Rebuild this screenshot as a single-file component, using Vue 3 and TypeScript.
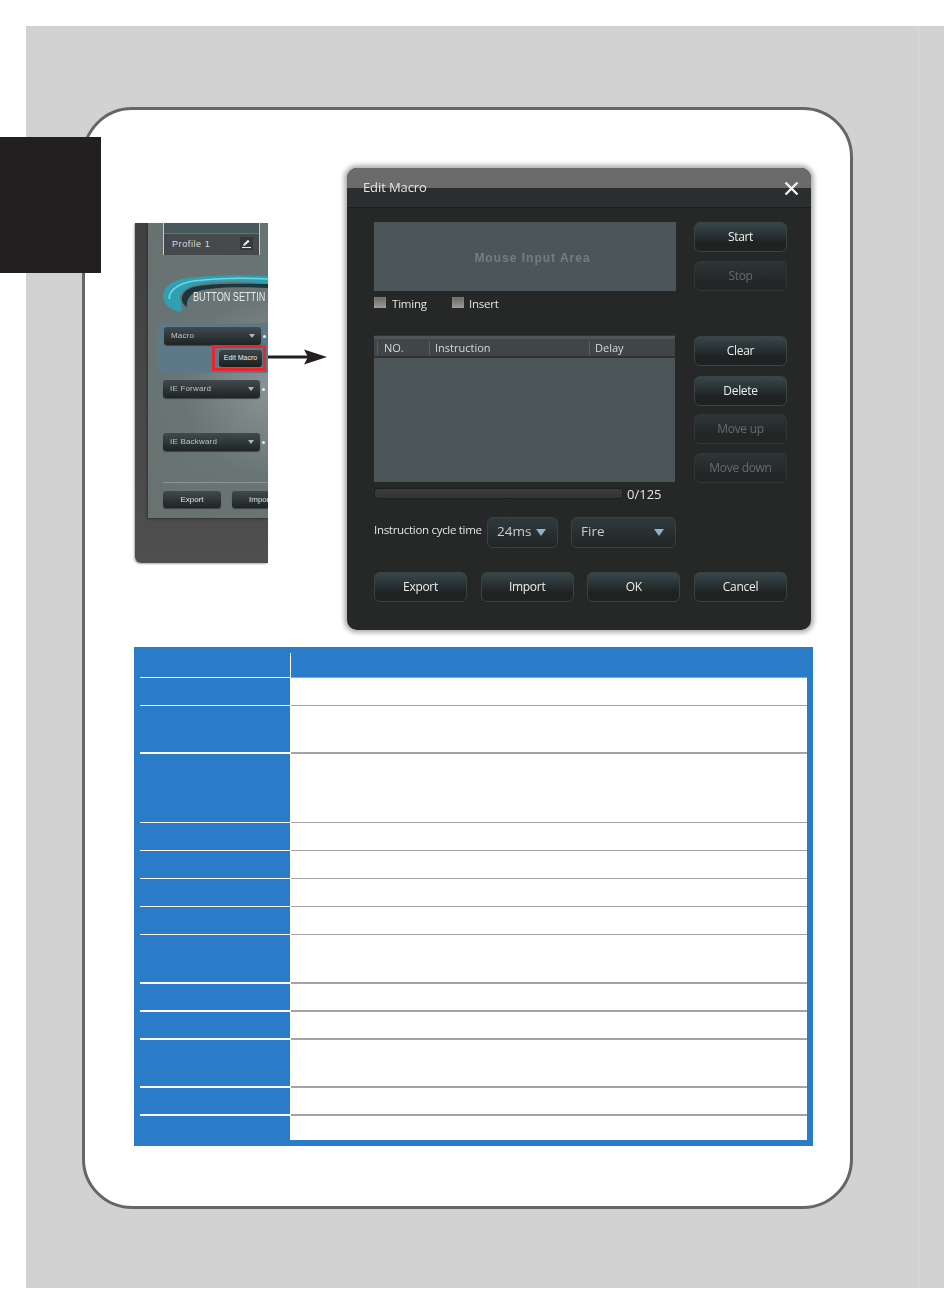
<script setup lang="ts">
const sideMain = [
  { label: "Start", off: false, cls: "" },
  { label: "Stop", off: true, cls: "mt-9" },
];
const sideList = [
  { label: "Clear", off: false, cls: "" },
  { label: "Delete", off: false, cls: "mt-10" },
  { label: "Move up", off: true, cls: "mt-8" },
  { label: "Move down", off: true, cls: "mt-9" },
];
const footer = ["Export", "Import", "OK", "Cancel"];
// row heights and rule weights read from the blue table
const rows = [
  { h: 28, thick: false },
  { h: 48, thick: true },
  { h: 69, thick: false },
  { h: 28, thick: false },
  { h: 28, thick: false },
  { h: 28, thick: false },
  { h: 28, thick: false },
  { h: 49, thick: true },
  { h: 28, thick: true },
  { h: 28, thick: true },
  { h: 48, thick: true },
  { h: 28, thick: true },
  { h: 24, thick: false },
];
</script>

<template>
  <div class="page">
    <div class="sheet">
      <div class="stripe" />
      <div class="tab" />
      <div class="card">
        <div class="top">
          <div class="shot">
            <div class="shot-panel">
              <div class="profile">
                <div class="profile-head" />
                <div class="profile-row">
                  <span class="profile-name">Profile 1</span>
                  <span class="pen">
                    <svg width="9" height="9" viewBox="0 0 9 9"><path d="M0 9h9V8H0zM1 7l.6-2L6 .8 7.6 2.4 3 6.6z" fill="#e8e8e8" /></svg>
                  </span>
                </div>
              </div>
              <div class="brand">
                <svg class="swoosh" width="105" height="38" viewBox="0 0 105 38">
                  <path d="M17 37C6 34-1 27 0 20 2 8 16 3 32 2 55 0 80 0 105 1v8C80 6 55 6 38 9 24 11 16 17 17 24 18 29 21 33 17 37z" fill="#2f9fb2" />
                  <path d="M24 32C17 28 17 20 24 15 32 9 60 8 105 9v4C70 11 42 13 33 17 26 20 23 26 24 32z" fill="#1c3640" />
                  <path d="M6 24C6 13 20 6 40 5 60 3 85 3 105 4" fill="none" stroke="#6fd6e2" stroke-width="1.5" />
                </svg>
                <span class="brand-text">BUTTON SETTIN</span>
              </div>
              <div class="active-box">
                <div class="drop">Macro<i /></div>
                <div class="edit-wrap">
                  <span class="edit-btn">Edit Macro</span>
                </div>
              </div>
              <div class="drop drop-forward">IE Forward<i /></div>
              <div class="drop drop-back">IE Backward<i /></div>
              <div class="shot-rule" />
              <div class="shot-btns">
                <span class="mini">Export</span>
                <span class="mini mini-cut">Impor</span>
              </div>
            </div>
          </div>
          <svg class="arrow" width="77" height="16" viewBox="0 0 77 16">
            <path d="M0 6.6h44v3H0z" fill="#231f20" />
            <path d="M36 .6 59 8 36 15.4 40 8z" fill="#231f20" />
          </svg>
          <div class="dialog">
            <div class="title-bar">
              <span class="title">Edit Macro</span>
              <svg class="close" width="15" height="15" viewBox="0 0 15 15"><path d="M1.5 1.5l12 12M13.5 1.5l-12 12" stroke="#f2f2f2" stroke-width="2.4" /></svg>
            </div>
            <div class="dialog-body">
              <div class="columns">
                <div class="col-left">
                  <div class="input-area">Mouse Input Area</div>
                  <div class="checks">
                    <label class="check"><i />Timing</label>
                    <label class="check check-2"><i />Insert</label>
                  </div>
                  <div class="list">
                    <div class="list-head">
                      <span class="c-no">NO.</span>
                      <span class="c-ins">Instruction</span>
                      <span class="c-del">Delay</span>
                    </div>
                  </div>
                  <div class="progress-row">
                    <div class="progress" />
                    <span>0/125</span>
                  </div>
                  <div class="cycle-row">
                    <span class="cycle-label">Instruction cycle time</span>
                    <div class="select select-ms">24ms<i /></div>
                    <div class="select select-fire">Fire<i /></div>
                  </div>
                </div>
                <div class="col-right">
                  <div class="side-group">
                    <button v-for="b in sideMain" :key="b.label" class="btn" :class="[b.cls, { off: b.off }]">{{ b.label }}</button>
                  </div>
                  <div class="side-group second">
                    <button v-for="b in sideList" :key="b.label" class="btn" :class="[b.cls, { off: b.off }]">{{ b.label }}</button>
                  </div>
                </div>
              </div>
              <div class="footer">
                <button v-for="f in footer" :key="f" class="btn">{{ f }}</button>
              </div>
            </div>
          </div>
        </div>

        <div class="table">
          <div class="t-head">
            <div class="t-head-left" />
            <div class="t-head-right" />
          </div>
          <div
            v-for="(r, i) in rows"
            :key="i"
            class="t-row"
            :class="{ thick: r.thick, last: i === rows.length - 1 }"
            :style="{ height: r.h + 'px' }"
          >
            <div class="t-left"><div class="t-left-fill" /></div>
            <div class="t-right"><div class="t-right-fill" /></div>
          </div>
        </div>
      </div>
    </div>
  </div>
</template>

<style>
html, body { margin: 0; background: #fff; }
</style>

<style scoped>
.page {
  width: 944px;
  height: 1314px;
  padding: 26px 0 0 26px;
  box-sizing: border-box;
  background: #fff;
  font-family: "Open Sans", "Liberation Sans", sans-serif;
}
.sheet {
  position: relative;
  height: 1262px;
  padding: 81px 91px 0 56px;
  box-sizing: border-box;
  background: #d2d2d2;
}
.stripe {
  position: absolute;
  left: 892px;
  top: 0;
  bottom: 0;
  width: 1px;
  background: #dcdcdc;
}
.tab {
  position: absolute;
  left: -26px;
  top: 111px;
  width: 101px;
  height: 136px;
  background: #231f20;
  z-index: 2;
}
.card {
  height: 1102px;
  box-sizing: border-box;
  border: 3px solid #666;
  border-radius: 50px;
  background: #fff;
  padding: 55px 0 0 50px;
}
.top {
  display: flex;
  align-items: flex-start;
}

/* left screenshot */
.shot {
  width: 133px;
  height: 340px;
  margin-top: 58px;
  padding-left: 1px;
  box-sizing: border-box;
  background: linear-gradient(#3f4040, #4f4f4f);
  border-radius: 0 0 0 6px;
  box-shadow: -1px 1px 2px #aaa;
  overflow: hidden;
  filter: blur(.3px);
}
.shot-panel {
  margin-left: 12px;
  height: 295px;
  padding-left: 15px;
  background: radial-gradient(circle at 105% 55%, #8b9597, #697474 45%, #667170);
  box-shadow: -1px 1px 2px #333;
  color: #d8dcdc;
  font: 8.5px "Liberation Sans", sans-serif;
}
.profile {
  width: 97px;
  height: 32px;
  box-sizing: border-box;
  border: 1px solid #a7d8de;
  border-top: none;
}
.profile-head {
  height: 10px;
  background: #47595d;
  border-bottom: 1px solid #6a7474;
}
.profile-row {
  height: 21px;
  display: flex;
  align-items: center;
  justify-content: space-between;
  padding: 0 6px 2px 8px;
  box-sizing: border-box;
  background: #45494b;
  font-size: 9px;
  letter-spacing: .6px;
}
.pen {
  width: 13px;
  height: 13px;
  display: flex;
  align-items: center;
  justify-content: center;
  background: #35393a;
}
.brand {
  position: relative;
  height: 38px;
  margin-top: 20px;
  overflow: hidden;
}
.swoosh { position: absolute; left: 0; top: 0; }
.brand-text {
  position: absolute;
  left: 30px;
  top: 15px;
  color: #e6eaea;
  font-size: 12px;
  white-space: nowrap;
  transform: scaleX(.76);
  transform-origin: left;
}
.active-box {
  position: relative;
  margin: 10px 0 0 -6px;
  height: 50px;
  padding: 4px 0 0 7px;
  box-sizing: border-box;
  background: #5d7987;
  border-radius: 4px 0 0 4px;
}
.drop {
  position: relative;
  width: 97px;
  height: 18px;
  box-sizing: border-box;
  padding-left: 7px;
  line-height: 17px;
  font-size: 8px;
  letter-spacing: .2px;
  color: #bcc4c4;
  background: linear-gradient(#404b4e, #1f2324);
  border-radius: 3px;
  box-shadow: 0 1px 1px #3c4545;
}
.drop i {
  position: absolute;
  right: 6px;
  top: 7px;
  border: 3.5px solid transparent;
  border-top: 4px solid #a9b8bd;
  border-bottom: 0;
}
.drop::after {
  content: "";
  position: absolute;
  right: -5px;
  top: 8px;
  width: 3px;
  height: 3px;
  border-radius: 50%;
  background: #e8eeee;
}
.drop-forward { margin-top: 7px; }
.drop-back { margin-top: 35px; }
.edit-wrap {
  position: absolute;
  left: 55px;
  top: 22px;
  width: 54px;
  height: 26px;
  box-sizing: border-box;
  border: 3px solid #e8262c;
  padding: 2px 0 0 4px;
  background: #5d7987;
}
.edit-btn {
  display: block;
  width: 43px;
  height: 17px;
  line-height: 16px;
  text-align: center;
  font-size: 7px;
  color: #eee;
  white-space: nowrap;
  background: linear-gradient(#3c4648, #1c1f20);
  border-radius: 3px;
}
.shot-rule {
  height: 1px;
  margin-top: 31px;
  background: #8b9494;
}
.shot-btns {
  display: flex;
  gap: 11px;
  margin-top: 8px;
}
.mini {
  flex: none;
  width: 58px;
  height: 17px;
  line-height: 17px;
  text-align: center;
  font-size: 8px;
  color: #dfe3e3;
  background: linear-gradient(#404b4e, #1f2324);
  border-radius: 3px;
  box-shadow: 0 1px 1px #3c4545;
}
.mini-cut {
  width: 36px;
  box-sizing: border-box;
  padding-left: 17px;
  text-align: left;
  border-radius: 3px 0 0 3px;
}

.arrow {
  flex: none;
  margin-top: 184px;
}

/* dialog */
.dialog {
  width: 464px;
  height: 462px;
  margin: 3px 0 0 2px;
  border-radius: 10px;
  background: #262828;
  box-shadow: 0 0 4px 3px #b4b4b4;
  overflow: hidden;
  color: #e4e6e6;
  font-size: 12px;
  filter: blur(.3px);
}
.title-bar {
  position: relative;
  height: 40px;
  box-sizing: border-box;
  background: linear-gradient(#6b6b6b 0 20px, #2b2e2f 20px);
  border-bottom: 1px solid #1c1d1d;
}
.title {
  position: absolute;
  left: 16px;
  top: 10px;
  font-size: 13px;
  letter-spacing: -.1px;
}
.close { position: absolute; right: 12px; top: 13px; }
.dialog-body {
  padding: 14px 24px 0 27px;
}
.columns {
  display: flex;
  gap: 18px;
}
.col-left { width: 302px; }
.col-right { width: 93px; }
.input-area {
  height: 69px;
  display: flex;
  align-items: center;
  justify-content: center;
  padding: 3px 0 0 15px;
  box-sizing: border-box;
  background: #4c5558;
  color: #757d7f;
  font: bold 12px "Liberation Sans", sans-serif;
  letter-spacing: 1px;
}
.checks {
  display: flex;
  height: 22px;
  align-items: center;
  margin-top: 1px;
}
.check {
  display: flex;
  align-items: center;
  font-size: 11.5px;
  letter-spacing: -.2px;
}
.check i {
  width: 12px;
  height: 11px;
  margin: -2px 6px 0 0;
  background: linear-gradient(#6a6a66, #9a9a94);
  box-shadow: inset 0 0 1px #ccc;
}
.check-2 { margin-left: 25px; }
.check-2 i { margin-right: 5px; }
.list {
  width: 301px;
  height: 147px;
  margin-top: 21px;
  box-sizing: border-box;
  padding-top: 3px;
  background: #4c5558;
  border-top: 1px solid #333;
}
.list-head {
  height: 19px;
  display: flex;
  align-items: center;
  box-sizing: border-box;
  background: #424546;
  border-bottom: 2px solid #2f3132;
  font-size: 11px;
  color: #d6d9d9;
}
.list-head span {
  height: 14px;
  line-height: 14px;
  box-sizing: border-box;
  padding-left: 5px;
  border-left: 1px solid #5e6162;
}
.c-no { width: 52px; margin-left: 3px; padding-left: 6px !important; }
.c-ins { width: 160px; }
.c-del { flex: 1; }
.progress-row {
  display: flex;
  align-items: center;
  gap: 4px;
  height: 13px;
  margin-top: 5px;
  font-size: 13px;
}
.progress {
  width: 249px;
  height: 11px;
  box-sizing: border-box;
  border: 1px solid #1e2020;
  border-radius: 3px;
  background: linear-gradient(#3b3d3d, #333535);
}
.cycle-row {
  display: flex;
  align-items: flex-start;
  margin-top: 17px;
}
.cycle-label {
  width: 113px;
  margin-top: 5px;
  font-size: 11.5px;
  letter-spacing: -.3px;
  white-space: nowrap;
}
.select {
  position: relative;
  height: 31px;
  box-sizing: border-box;
  padding-left: 9px;
  line-height: 27px;
  font-size: 13.5px;
  color: #c9cdcd;
  border: 1px solid #3b4142;
  border-radius: 6px;
  background: linear-gradient(#2f3a3d, #222526);
}
.select i {
  position: absolute;
  top: 11px;
  border: 5.5px solid transparent;
  border-top: 7px solid #8fb3c6;
  border-bottom: 0;
}
.select-ms { width: 71px; }
.select-ms i { right: 11px; }
.select-fire { width: 105px; margin-left: 13px; }
.select-fire i { right: 11px; }
.side-group { display: flex; flex-direction: column; }
.second { margin-top: 45px; }
.mt-10 { margin-top: 10px; }
.mt-8 { margin-top: 8px; }
.mt-9 { margin-top: 9px; }
.btn {
  height: 30px;
  width: 93px;
  padding: 0 0 1px;
  box-sizing: border-box;
  font-family: "Open Sans", "Liberation Sans", sans-serif;
  font-size: 12px;
  letter-spacing: -.3px;
  color: #eceeee;
  border: 1px solid #3a4344;
  border-radius: 6px;
  background: linear-gradient(#38474b, #1f2223 70%);
}
.btn.off {
  color: #666a6a;
  border-color: #313637;
  background: linear-gradient(#2e3638, #232627 70%);
}
.footer {
  display: flex;
  justify-content: space-between;
  width: 413px;
  margin-top: 24px;
}

/* blue table */
.table {
  width: 679px;
  margin: 17px 0 0 -1px;
  padding: 0 6px 6px 0;
  box-sizing: border-box;
  background: #2a7bc8;
}
.t-head {
  display: flex;
  height: 31px;
}
.t-head-left {
  position: relative;
  width: 157px;
  box-sizing: border-box;
  margin-top: 6px;
  border-right: 1px solid #fff;
}
.t-head-left::after {
  content: "";
  position: absolute;
  left: 6px;
  right: 0;
  bottom: 0;
  height: 1px;
  background: #fff;
}
.t-head-right {
  flex: 1;
  border-bottom: 1px solid #a3a3a3;
}
.t-row { display: flex; }
.t-left {
  width: 156px;
  box-sizing: border-box;
  padding-left: 6px;
}
.t-left-fill {
  height: 100%;
  box-sizing: border-box;
  border-bottom: 1px solid #fff;
}
.t-right {
  flex: 1;
  padding-left: 1px;
  background: #fff;
}
.t-right-fill {
  height: 100%;
  box-sizing: border-box;
  border-bottom: 1px solid #a3a3a3;
}
.thick .t-left-fill,
.thick .t-right-fill { border-bottom-width: 2px; }
.last .t-left-fill,
.last .t-right-fill { border-bottom: none; }
</style>
